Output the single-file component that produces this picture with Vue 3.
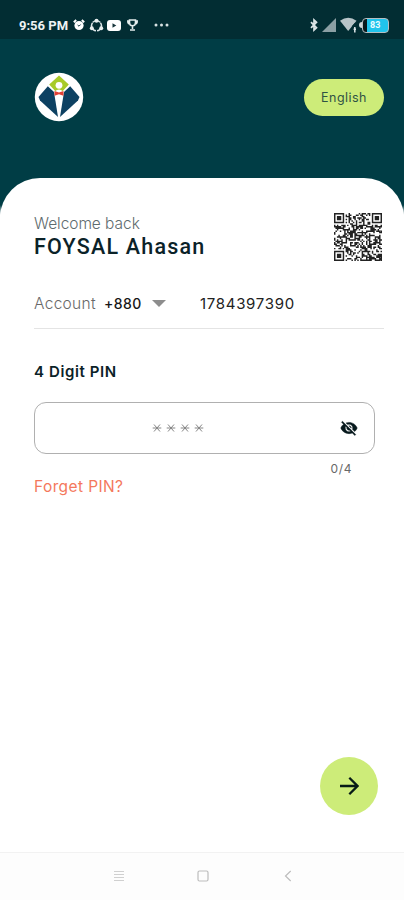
<template>
  <div class="screen">
    <div class="status-bar">
      <div class="status-left">
        <span class="time">9:56 PM</span>
        <svg class="alarm" width="12" height="12" viewBox="0 0 12 12">
          <path d="M0.8 3.2 3.2 1M11.2 3.2 8.8 1" stroke="#fff" stroke-width="1.9" />
          <circle cx="6" cy="6.5" r="4.6" fill="#fff" />
          <path d="M4.6 6 6 7.2 7.6 5.5" fill="none" stroke="#193b42" stroke-width="1" />
        </svg>
        <svg class="share" width="15" height="15" viewBox="0 0 15 15">
          <circle cx="7.5" cy="7.8" r="5" fill="none" stroke="#dce5e7" stroke-width="1.6" />
          <circle cx="7.5" cy="2.8" r="2" fill="#e8eeee" />
          <circle cx="2.8" cy="10.3" r="2" fill="#e8eeee" />
          <circle cx="12.2" cy="10.3" r="2" fill="#e8eeee" />
          <path d="M3.6 4.2 5 5.8M11.4 4.2 10 5.8M7.5 11.5v3" stroke="#022d33" stroke-width="1" />
        </svg>
        <svg class="video" width="14" height="11" viewBox="0 0 14 11">
          <rect width="14" height="11" rx="3" fill="#fff" />
          <path d="M5.5 3.2v4.6L9.3 5.5z" fill="#17353b" />
        </svg>
        <svg class="trophy" width="11" height="12" viewBox="0 0 11 12">
          <path d="M2.5 1h6v2.7a3 3 0 0 1-6 0zM2.5 2H.8c0 2 .8 3 2.1 3M8.5 2h1.7c0 2-.8 3-2.1 3M5.5 6v4M3 11h5" fill="none" stroke="#e5eded" stroke-width="1.6" />
        </svg>
        <svg class="dots" width="15" height="4" viewBox="0 0 15 4">
          <circle v-for="x in [2, 7.5, 13]" :key="x" :cx="x" cy="2" r="1.5" fill="#d8e2e3" />
        </svg>
      </div>
      <div class="status-right">
        <svg width="8" height="14" viewBox="0 0 8 14">
          <path d="M1 4.2 6.5 9.8 4 12V2l2.5 2.2L1 9.8" fill="none" stroke="#dce5e7" stroke-width="1.7" />
        </svg>
        <svg class="signal" width="14" height="14" viewBox="0 0 14 14">
          <path d="M14 0v14H0z" fill="#8b9fa4" />
        </svg>
        <svg class="wifi" width="18" height="16" viewBox="0 0 18 16">
          <path d="M0 3.8Q8.2-2.2 16.5 3.8L8.2 14z" fill="#b8c4c8" />
          <path d="M14.8 8v7M12.8 10.2l2-2 2 2M13 13l1.8 2 1.8-2" stroke="#022d33" stroke-width="3" fill="none" />
          <path d="M14.8 10v5.5M13.6 12.2h2.4" stroke="#dce5e7" stroke-width="1.5" fill="none" />
        </svg>
        <div class="battery">
          <div class="battery-level">83</div>
        </div>
      </div>
    </div>

    <header class="header">
      <svg class="logo" width="50" height="50" viewBox="0 0 50 50">
        <circle cx="25" cy="25" r="24.2" fill="#fff" />
        <path d="M25 3.5 34.8 12.5 28.8 19H21.2L15.2 12.5z" fill="#a8cb28" />
        <circle cx="25" cy="13.3" r="3.4" fill="#fff" />
        <path d="M21 19.2Q25 15.8 29 19.2V20.5H21z" fill="#fff" />
        <path d="M13.8 14.2 4.5 25 6 28.5 24 45 20 20z" fill="#0d4162" />
        <path d="M36.2 14.2 45.5 25 44 28.5 26 45 30 20z" fill="#0d4162" />
        <path d="M20.5 19 25 20.5 29.5 19V23.7L25 22.3 20.5 23.7z" fill="#e34035" />
      </svg>
      <button class="language">English</button>
    </header>

    <main class="card">
      <section class="user">
        <div>
          <div class="welcome">Welcome back</div>
          <div class="name">FOYSAL Ahasan</div>
        </div>
        <svg class="qr" width="48" height="48" viewBox="0 0 33 33">
          <path :d="qrPath" fill="#222" />
        </svg>
      </section>

      <section class="account">
        <span class="account-label">Account</span>
        <span class="code">+880</span>
        <span class="caret"></span>
        <span class="phone">1784397390</span>
      </section>

      <section class="pin">
        <div class="pin-title">4 Digit PIN</div>
        <div class="pin-field">
          <svg class="stars" width="54" height="12" viewBox="0 0 54 12">
            <path v-for="x in [5, 19, 33, 47]" :key="x" :d="starPath(x)" stroke="#858585" stroke-width="1" />
          </svg>
          <svg class="eye" width="18" height="18" viewBox="0 0 24 24">
            <path fill="#07191d" stroke="#07191d" stroke-width="0.6" d="M12 7c2.76 0 5 2.24 5 5 0 .65-.13 1.26-.36 1.83l2.92 2.92c1.51-1.26 2.7-2.89 3.43-4.75-1.73-4.39-6-7.5-11-7.5-1.4 0-2.74.25-3.98.7l2.16 2.16C10.74 7.13 11.35 7 12 7zM2 4.27l2.28 2.28.46.46C3.08 8.3 1.78 10.02 1 12c1.73 4.39 6 7.5 11 7.5 1.55 0 3.03-.3 4.38-.84l.42.42L19.73 22 21 20.73 3.27 3 2 4.27zM7.53 9.8l1.55 1.55c-.05.21-.08.43-.08.65 0 1.66 1.34 3 3 3 .22 0 .44-.03.65-.08l1.55 1.55c-.67.33-1.41.53-2.2.53-2.76 0-5-2.24-5-5 0-.79.2-1.53.53-2.2zm4.31-.78 3.15 3.15.02-.16c0-1.66-1.34-3-3-3l-.17.01z" />
          </svg>
        </div>
        <div class="counter">0/4</div>
        <a class="forget">Forget PIN?</a>
      </section>

      <button class="next">
        <svg width="20" height="20" viewBox="0 0 20 20">
          <path d="M1 10h17M10.3 1.8 18.5 10l-8.2 8.2" fill="none" stroke="#071b16" stroke-width="2.3" />
        </svg>
      </button>
    </main>

    <nav class="nav-bar">
      <svg width="12" height="12" viewBox="0 0 12 12">
        <path d="M1 1.5h10M1 4.5h10M1 7.5h10M1 10.5h10" stroke="#d0d0d0" stroke-width="1" />
      </svg>
      <svg width="12" height="12" viewBox="0 0 12 12">
        <rect x="1" y="1" width="10" height="10" rx="1.5" fill="none" stroke="#bdbdbd" stroke-width="1.2" />
      </svg>
      <svg width="12" height="12" viewBox="0 0 12 12">
        <path d="M8.7 1 3.5 6l5.2 5" fill="none" stroke="#bdbdbd" stroke-width="1.2" />
      </svg>
    </nav>
  </div>
</template>

<script setup>
const QR_SIZE = 33;
const qrPath = buildQr();

// eye of the code: a 7x7 ring with a 3x3 centre
function finder(x, y) {
  const edge = Math.max(Math.abs(x - 3), Math.abs(y - 3));
  return edge === 3 || edge <= 1;
}

function buildQr() {
  let seed = 8801;
  let d = '';
  for (let y = 0; y < QR_SIZE; y++) {
    for (let x = 0; x < QR_SIZE; x++) {
      seed = (seed * 1103515245 + 12345) % 2147483648;
      let dark = seed / 2147483648 > 0.48;
      const left = x < 8;
      const right = x > QR_SIZE - 9;
      const top = y < 8;
      const bottom = y > QR_SIZE - 9;
      if ((left && top) || (right && top) || (left && bottom)) {
        dark = finder(right ? x - QR_SIZE + 7 : x, bottom ? y - QR_SIZE + 7 : y);
      }
      if (dark) d += `M${x} ${y}h1v1h-1z`;
    }
  }
  return d;
}

function starPath(x) {
  return `M${x - 4.3} 6H${x + 4.3}M${x - 3} 2.5 ${x + 3} 9.5M${x + 3} 2.5 ${x - 3} 9.5`;
}
</script>

<style>
body {
  margin: 0;
}
</style>

<style scoped>
.screen {
  display: flex;
  flex-direction: column;
  width: 404px;
  height: 900px;
  overflow: hidden;
  background: linear-gradient(#003d45 205px, #fff 215px);
  font-family: Inter, "Liberation Sans", sans-serif;
  color: #0b2228;
}

button {
  border: 0;
  padding: 0;
  font-family: inherit;
}

svg {
  display: block;
  flex: none;
}

.status-bar {
  display: flex;
  justify-content: space-between;
  box-sizing: border-box;
  height: 39px;
  padding: 10px 15px 0 19px;
  background: #022d33;
}

.status-left,
.status-right {
  display: flex;
  align-items: center;
  height: 30px;
}

.time {
  width: 50px;
  font: 700 13px Roboto, sans-serif;
  white-space: nowrap;
  color: #eef3f3;
}

.alarm,
.share {
  margin-left: 4px;
}

.video {
  margin-left: 3px;
}

.trophy {
  margin-left: 6px;
}

.dots {
  margin-left: 16px;
}

.signal {
  margin-left: 4px;
}

.wifi {
  margin: 0 1px 0 4px;
}

.battery {
  display: flex;
  align-items: center;
}

.battery::before {
  content: "";
  width: 3px;
  height: 6px;
  border-radius: 3px 0 0 3px;
  background: #cdd6d8;
}

.battery-level {
  box-sizing: border-box;
  width: 27px;
  height: 15px;
  padding-left: 7px;
  border: 1px solid #b5bec1;
  border-radius: 4px;
  background: linear-gradient(90deg, #08191c 4px, #20c4ec 4px);
  font: 700 9px/13px Roboto, sans-serif;
  color: #e8fbff;
}

.header {
  display: flex;
  justify-content: space-between;
  align-items: flex-start;
  box-sizing: border-box;
  height: 139px;
  padding: 33px 20px 0 34px;
}

.language {
  width: 80px;
  height: 37px;
  margin-top: 7px;
  border-radius: 19px;
  background: #cdec79;
  font-size: 12.5px;
  letter-spacing: 0.45px;
  color: #2f5244;
}

.card {
  display: flex;
  flex-direction: column;
  box-sizing: border-box;
  height: 674px;
  padding: 34px 20px 0 34px;
  border-radius: 40px 40px 0 0;
  background: #fff;
}

.user {
  display: flex;
  justify-content: space-between;
  height: 72px;
}

.welcome {
  margin-top: 2px;
  font-size: 15.5px;
  font-weight: 300;
  line-height: 19px;
  letter-spacing: -0.05px;
  color: #5e6b6e;
}

.name {
  font-family: Roboto, sans-serif;
  font-size: 21.5px;
  font-weight: 500;
  line-height: 27px;
  letter-spacing: 1.2px;
}

.qr {
  margin: 1px 2px 0 0;
}

.account {
  display: flex;
  align-items: center;
  box-sizing: border-box;
  height: 45px;
  padding-bottom: 6px;
  border-bottom: 1px solid #e4e4e4;
}

.account-label {
  width: 70px;
  font-size: 15.5px;
  font-weight: 300;
  letter-spacing: 0.3px;
  color: #686868;
}

.code {
  width: 48px;
  font-size: 14px;
  font-weight: 500;
  letter-spacing: 0.4px;
  color: #161616;
}

.caret {
  border: 7px solid transparent;
  border-top-color: #8d8d8d;
  border-bottom: 0;
}

.phone {
  margin-left: 34px;
  font-size: 15px;
  letter-spacing: 0.7px;
  color: #222;
}

.pin {
  display: flex;
  flex-direction: column;
  padding-top: 33px;
}

.pin-title {
  height: 40px;
  font-size: 15px;
  font-weight: 600;
  line-height: 20px;
  letter-spacing: 0.6px;
}

.pin-field {
  display: flex;
  justify-content: space-between;
  align-items: center;
  box-sizing: border-box;
  width: 341px;
  height: 52px;
  padding: 0 16px 0 117px;
  border: 1px solid #b0b0b0;
  border-radius: 12px;
}

.counter {
  margin: 7px 32px 0 0;
  font-size: 12px;
  line-height: 16px;
  text-align: right;
  letter-spacing: 0.6px;
  color: #686868;
}

.forget {
  font-size: 15.5px;
  line-height: 20px;
  letter-spacing: 0.4px;
  color: #f4785c;
}

.next {
  display: flex;
  align-items: center;
  justify-content: center;
  align-self: flex-end;
  width: 58px;
  height: 58px;
  margin: auto 6px 37px 0;
  border-radius: 50%;
  background: #cdec79;
}

.nav-bar {
  display: flex;
  justify-content: center;
  align-items: center;
  gap: 72.5px;
  flex: 1;
  padding: 0 0 2px 2px;
  border-top: 1px solid #f2f2f2;
  background: #fdfdfd;
}
</style>
